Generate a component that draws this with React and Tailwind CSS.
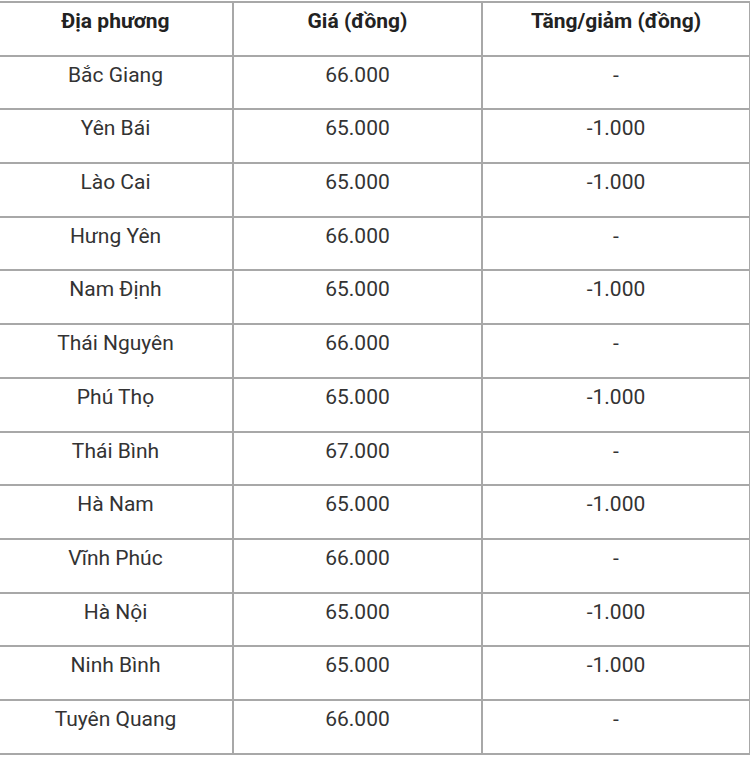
const rows = [
  ["Bắc Giang", "66.000", "-"],
  ["Yên Bái", "65.000", "-1.000"],
  ["Lào Cai", "65.000", "-1.000"],
  ["Hưng Yên", "66.000", "-"],
  ["Nam Định", "65.000", "-1.000"],
  ["Thái Nguyên", "66.000", "-"],
  ["Phú Thọ", "65.000", "-1.000"],
  ["Thái Bình", "67.000", "-"],
  ["Hà Nam", "65.000", "-1.000"],
  ["Vĩnh Phúc", "66.000", "-"],
  ["Hà Nội", "65.000", "-1.000"],
  ["Ninh Bình", "65.000", "-1.000"],
  ["Tuyên Quang", "66.000", "-"],
];

export default function App() {
  return (
    <div className="w-[750px] h-[767px] bg-white overflow-hidden pt-[1px] font-['Roboto',sans-serif] text-[21px] leading-[1.5] text-[#333]">
      <table className="ml-[-3px] w-[752px] table-fixed border-collapse">
        <colgroup>
          <col className="w-[235px]" />
          <col className="w-[249px]" />
          <col className="w-[268px]" />
        </colgroup>
        <thead>
          <tr className="h-[53.7px]">
            <th className="border-2 border-[#a8a8a8] align-top pt-[3px] font-bold text-[#222]">Địa phương</th>
            <th className="border-2 border-[#a8a8a8] align-top pt-[3px] font-bold text-[#222]">Giá (đồng)</th>
            <th className="border-2 border-[#a8a8a8] align-top pt-[3px] font-bold text-[#222]">Tăng/giảm (đồng)</th>
          </tr>
        </thead>
        <tbody>
          {rows.map((r) => (
            <tr key={r[0]} className="h-[53.7px]">
              {r.map((c, i) => (
                <td key={i} className="border-2 border-[#a8a8a8] align-top pt-[3px] text-center">
                  {c}
                </td>
              ))}
            </tr>
          ))}
        </tbody>
      </table>
    </div>
  );
}
